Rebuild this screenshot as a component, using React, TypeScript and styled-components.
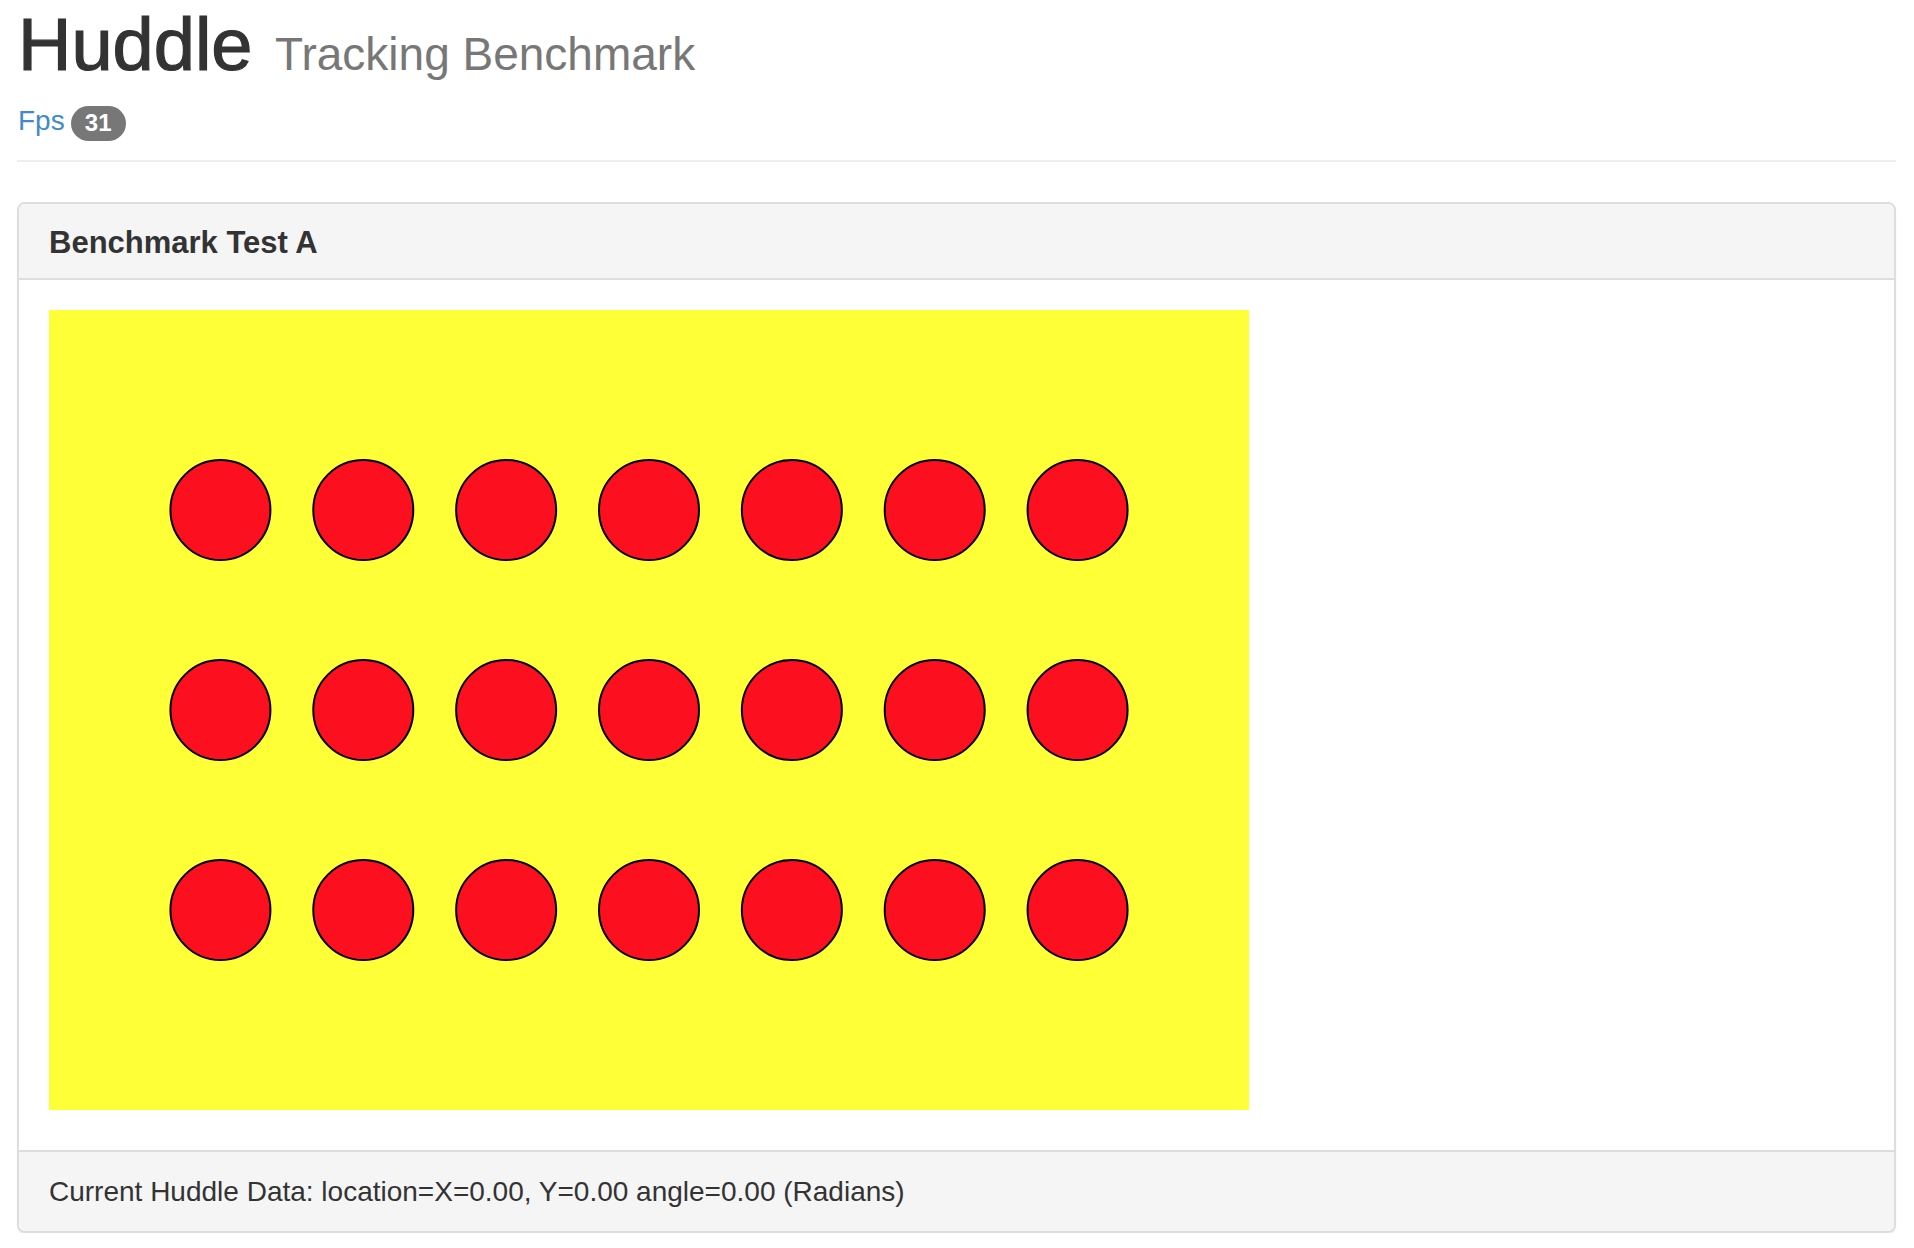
import React from "react";
import styled, { createGlobalStyle } from "styled-components";

const GlobalStyle = createGlobalStyle`
  html, body {
    margin: 0;
    padding: 0;
    background: #ffffff;
  }
  body {
    font-family: "Liberation Sans", Helvetica, Arial, sans-serif;
    color: #333333;
  }
`;

const Page = styled.div`
  padding: 5px 18px 0 17px;
`;

const PageHeader = styled.header`
  padding-bottom: 19px;
  border-bottom: 2px solid #eeeeee;
`;

const Title = styled.h1`
  margin: 0;
  padding-left: 1px;
  font-size: 74px;
  line-height: 80px;
  font-weight: 400;
  color: #333333;
  -webkit-text-stroke: 1.2px #333333;
  white-space: nowrap;
`;

const Subtitle = styled.small`
  font-size: 46px;
  line-height: 1;
  font-weight: 400;
  color: #777777;
  -webkit-text-stroke: 0;
  margin-left: 2px;
`;

const FpsRow = styled.div`
  margin-top: 16px;
  height: 40px;
  display: flex;
  align-items: center;
  gap: 6px;
  font-size: 28px;
  line-height: 40px;
`;

const FpsLabel = styled.span`
  color: #428bca;
  padding-left: 1px;
`;

const Badge = styled.span`
  display: inline-flex;
  align-items: center;
  justify-content: center;
  height: 35px;
  min-width: 55px;
  box-sizing: border-box;
  padding: 0 14px;
  margin-top: 4px;
  border-radius: 18px;
  background: #777777;
  color: #ffffff;
  font-size: 24px;
  font-weight: 700;
`;

const Panel = styled.section`
  margin-top: 40px;
  border: 2px solid #dddddd;
  border-radius: 8px;
  background: #ffffff;
  box-shadow: 0 2px 2px rgba(0, 0, 0, 0.05);
  overflow: hidden;
`;

const PanelHeading = styled.div`
  padding: 22px 30px 19px;
  background: #f5f5f5;
  border-bottom: 2px solid #dddddd;
`;

const PanelTitle = styled.h3`
  margin: 0;
  font-size: 31px;
  line-height: 33px;
  font-weight: 700;
  color: #333333;
`;

const PanelBody = styled.div`
  padding: 30px 30px 40px;
`;

const Arena = styled.svg`
  display: block;
`;

const PanelFooter = styled.div`
  padding: 20px 30px 19px;
  background: #f5f5f5;
  border-top: 2px solid #dddddd;
  font-size: 28px;
  line-height: 40px;
  color: #333333;
`;

const COLS = 7;
const ROWS = [200, 400, 600];
const STEP = 1000 / 7;

export default function App() {
  const circles: { x: number; y: number }[] = [];
  ROWS.forEach((y) => {
    for (let i = 0; i < COLS; i++) {
      circles.push({ x: 600 + (i - 3) * STEP, y });
    }
  });

  return (
    <>
      <GlobalStyle />
      <Page>
        <PageHeader>
          <Title>
            Huddle <Subtitle>Tracking Benchmark</Subtitle>
          </Title>
          <FpsRow>
            <FpsLabel>Fps</FpsLabel>
            <Badge>31</Badge>
          </FpsRow>
        </PageHeader>
        <Panel>
          <PanelHeading>
            <PanelTitle>Benchmark Test A</PanelTitle>
          </PanelHeading>
          <PanelBody>
            <Arena width={1200} height={800} viewBox="0 0 1200 800">
              <rect x={0} y={0} width={1200} height={800} fill="#ffff38" />
              {circles.map((c, i) => (
                <circle
                  key={i}
                  cx={c.x}
                  cy={c.y}
                  r={50}
                  fill="#fc1020"
                  stroke="#000000"
                  strokeWidth={2}
                />
              ))}
            </Arena>
          </PanelBody>
          <PanelFooter>
            Current Huddle Data: location=X=0.00, Y=0.00 angle=0.00 (Radians)
          </PanelFooter>
        </Panel>
      </Page>
    </>
  );
}
